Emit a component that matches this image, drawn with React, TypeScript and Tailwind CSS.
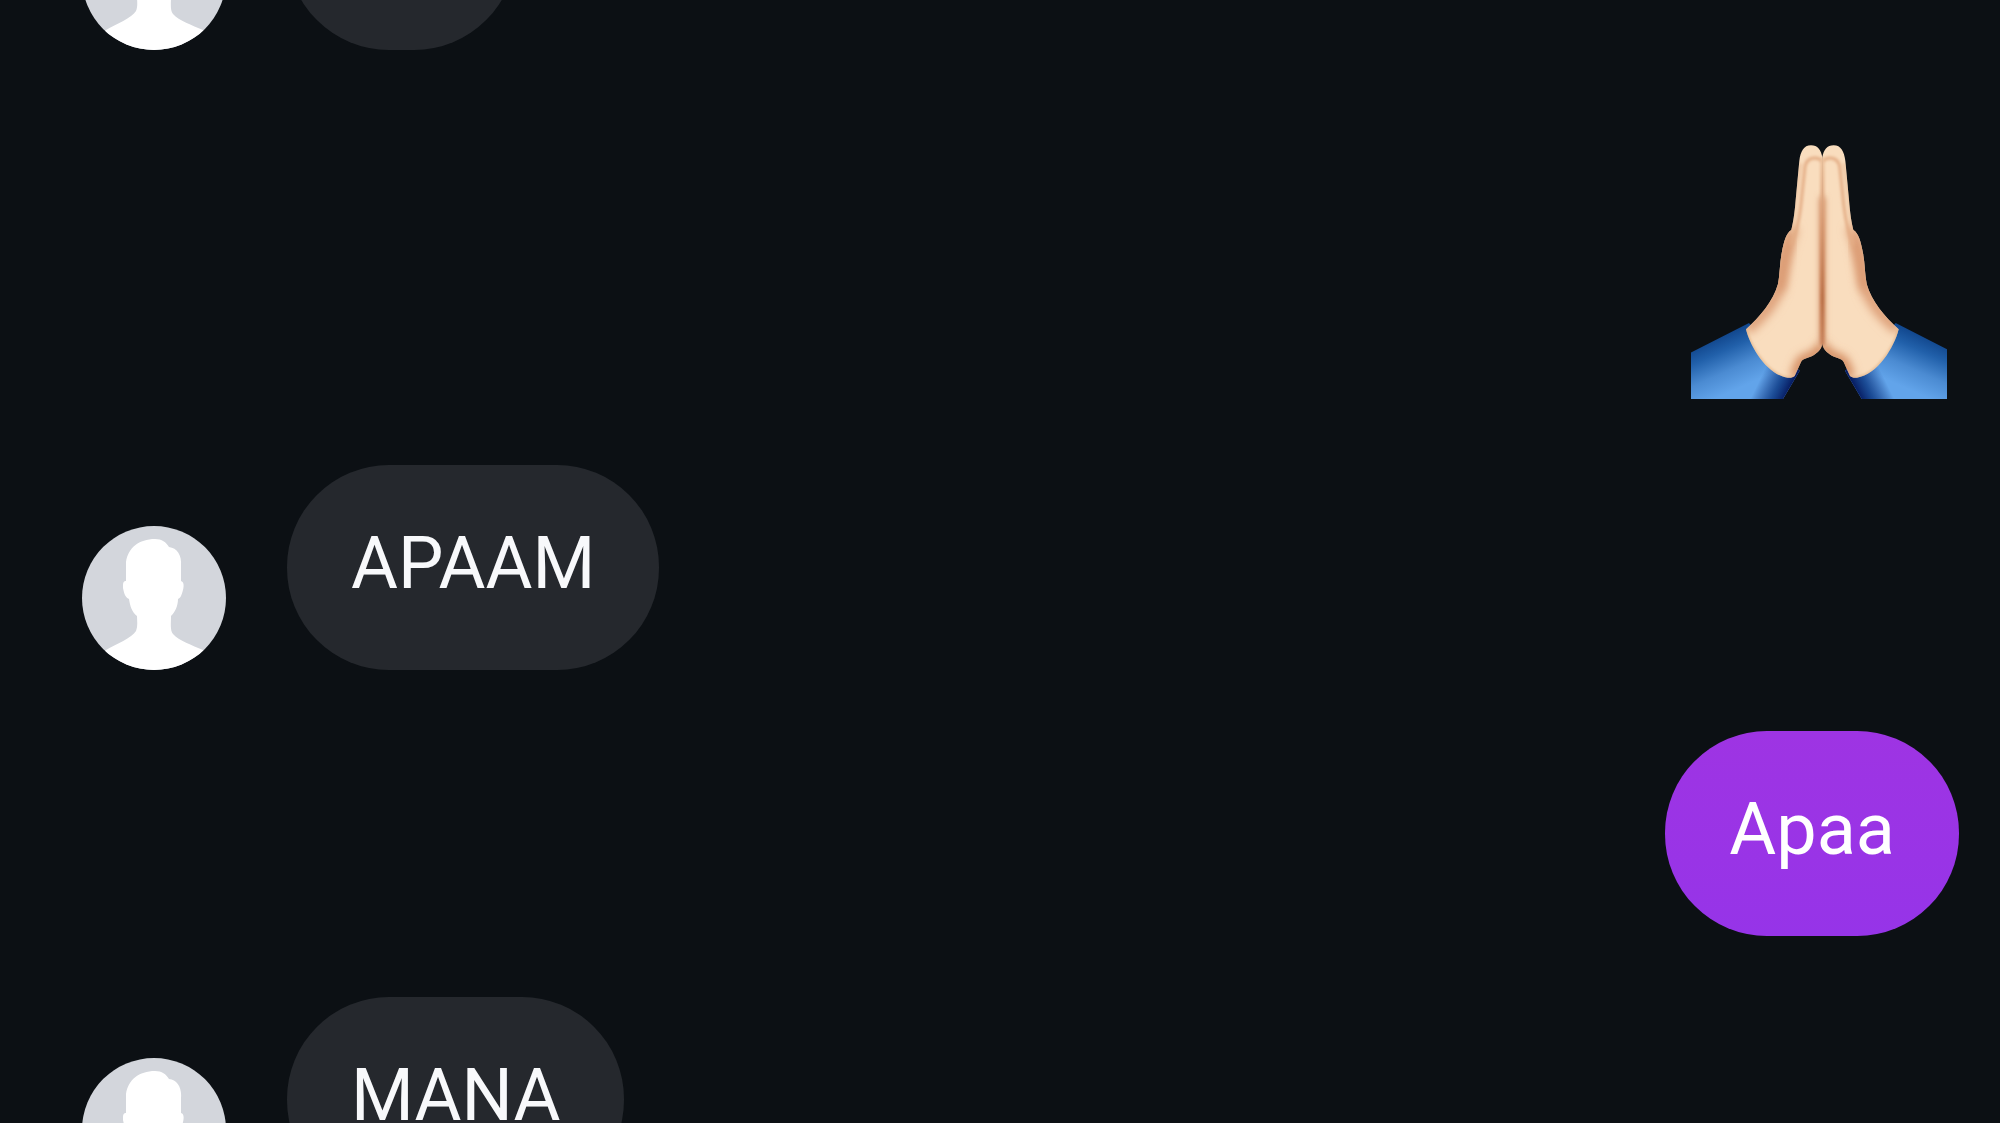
import type { ReactNode } from "react";

function Avatar() {
  return (
    <svg
      viewBox="0 0 144 144"
      role="img"
      aria-label="Profile photo"
      className="size-36 shrink-0 rounded-full bg-[#d3d6dc]"
    >
      <path
        fill="#fff"
        d="M73 13 C80 13 84 16 87 21 C95 22 100 29 99 40 L99 55 C103 56 102 63 99 70 C98 72 97 72 96 73 C96 80 93 86 89 90 C89 98 88 104 91 108 C97 115 110 119 121 124 L144 144 L0 144 L24 124 C34 118 50 112 54 105 C56 100 55 95 55 90 C50 86 48 80 47 73 C43 71 42 67 41 62 C41 57 41 55 44 55 L44 36 C46 22 57 13 73 13 Z"
      />
    </svg>
  );
}

function FoldedHands() {
  return (
    <svg
      viewBox="32 42 768 768"
      role="img"
      aria-label="Folded hands"
      className="mt-[33px] mr-3 mb-1 size-64"
    >
      <defs>
        <linearGradient id="sleeve" gradientUnits="userSpaceOnUse" x1="115" y1="612" x2="185" y2="770">
          <stop offset="0" stopColor="#0e4288" />
          <stop offset="0.3" stopColor="#2160aa" />
          <stop offset="0.65" stopColor="#4b8bd2" />
          <stop offset="1" stopColor="#62a4ea" />
        </linearGradient>
        <linearGradient id="cuff" gradientUnits="userSpaceOnUse" x1="240" y1="745" x2="332" y2="790">
          <stop offset="0" stopColor="#001d68" stopOpacity="0" />
          <stop offset="0.55" stopColor="#042f7a" stopOpacity="0.75" />
          <stop offset="1" stopColor="#000b50" />
        </linearGradient>
        <linearGradient id="seam" x1="0" y1="0" x2="0" y2="1">
          <stop offset="0" stopColor="#ecc19b" />
          <stop offset="0.35" stopColor="#d8976e" />
          <stop offset="0.75" stopColor="#b9693f" />
          <stop offset="1" stopColor="#c98058" />
        </linearGradient>
        <filter id="soft" x="-50%" y="-50%" width="200%" height="200%">
          <feGaussianBlur stdDeviation="14" />
        </filter>
        <filter id="seamSoft" filterUnits="userSpaceOnUse" x="360" y="60" width="132" height="620">
          <feGaussianBlur stdDeviation="9" />
        </filter>
        <filter id="fine" x="-50%" y="-50%" width="200%" height="200%">
          <feGaussianBlur stdDeviation="4" />
        </filter>
        <path
          id="palm"
          d="M426 82 C422 60 412 46 392 46 C370 46 361 64 357 92 L346 210 C343 250 338 280 333 300 C318 308 310 335 304 370 C298 400 299 430 293 462 C279 512 238 562 197 598 C210 652 262 736 322 743 C330 744 338 743 343 738 L362 696 C368 684 390 684 404 673 C417 664 424 655 426 640 Z"
        />
        <clipPath id="palmClip">
          <use href="#palm" />
        </clipPath>
        <g id="half">
          <path d="M12 678 L206 579 L260 640 L358 722 L308 807 L12 807 Z" fill="url(#sleeve)" />
          <path d="M200 579 L358 722 L308 807 L200 807 Z" fill="url(#cuff)" />
          <use href="#palm" fill="#f9ddbe" />
          <g clipPath="url(#palmClip)" fill="none">
            <path
              d="M340 290 C318 330 310 400 300 462 C285 515 240 565 197 598"
              stroke="#dc9c74"
              strokeWidth="34"
              filter="url(#soft)"
            />
            <path
              d="M332 330 C308 385 308 430 298 480"
              stroke="#d9976e"
              strokeWidth="22"
              filter="url(#soft)"
            />
            <path
              d="M342 742 L362 694 C368 684 390 684 404 673 C417 664 424 655 426 640"
              stroke="#cf8255"
              strokeWidth="28"
              filter="url(#soft)"
            />
            <path
              d="M361 100 L346 210 C343 250 339 280 334 310"
              stroke="#e9bc97"
              strokeWidth="6"
              filter="url(#fine)"
            />
            <path
              d="M426 94 C412 78 380 80 374 108 L361 230 C356 270 348 310 333 345"
              stroke="#e3ac84"
              strokeWidth="9"
              filter="url(#fine)"
            />
            <path d="M426 200 L426 640" stroke="#c87e54" strokeWidth="14" filter="url(#seamSoft)" />
            <path
              d="M197 598 C210 652 262 736 322 743 L342 742"
              stroke="#d59a66"
              strokeWidth="4"
              filter="url(#fine)"
            />
          </g>
        </g>
      </defs>
      <use href="#half" />
      <use href="#half" transform="matrix(-1 0 0 1 852 0)" />
      <path d="M420 84 L432 84 L432 646 L420 646 Z" fill="url(#seam)" filter="url(#fine)" />
    </svg>
  );
}

function Received({ children }: { children?: ReactNode }) {
  return (
    <li className="flex items-end gap-[61px] pl-[82px]">
      <Avatar />
      <p className="min-h-[205px] min-w-[229px] rounded-[102px] bg-[#25282d] px-16 pt-[47px] pb-[55px] text-7xl leading-[103px] text-[#f8f9fb]">
        {children}
      </p>
    </li>
  );
}

function Sent({ children }: { children: ReactNode }) {
  return (
    <li className="flex justify-end pr-[41px]">
      <p className="rounded-[102px] bg-linear-to-b from-[#9e34e3] to-[#9634e8] px-16 pt-[47px] pb-[55px] text-7xl leading-[103px] text-white">
        {children}
      </p>
    </li>
  );
}

export default function App() {
  return (
    <main className="h-screen overflow-hidden bg-[#0c1014] font-['Roboto',sans-serif]">
      <ul className="-mt-[155px] flex flex-col gap-[61px]">
        <Received />
        <li className="flex justify-end pr-[41px]">
          <FoldedHands />
        </li>
        <Received>APAAM</Received>
        <Sent>Apaa</Sent>
        <Received>MANA</Received>
      </ul>
    </main>
  );
}
